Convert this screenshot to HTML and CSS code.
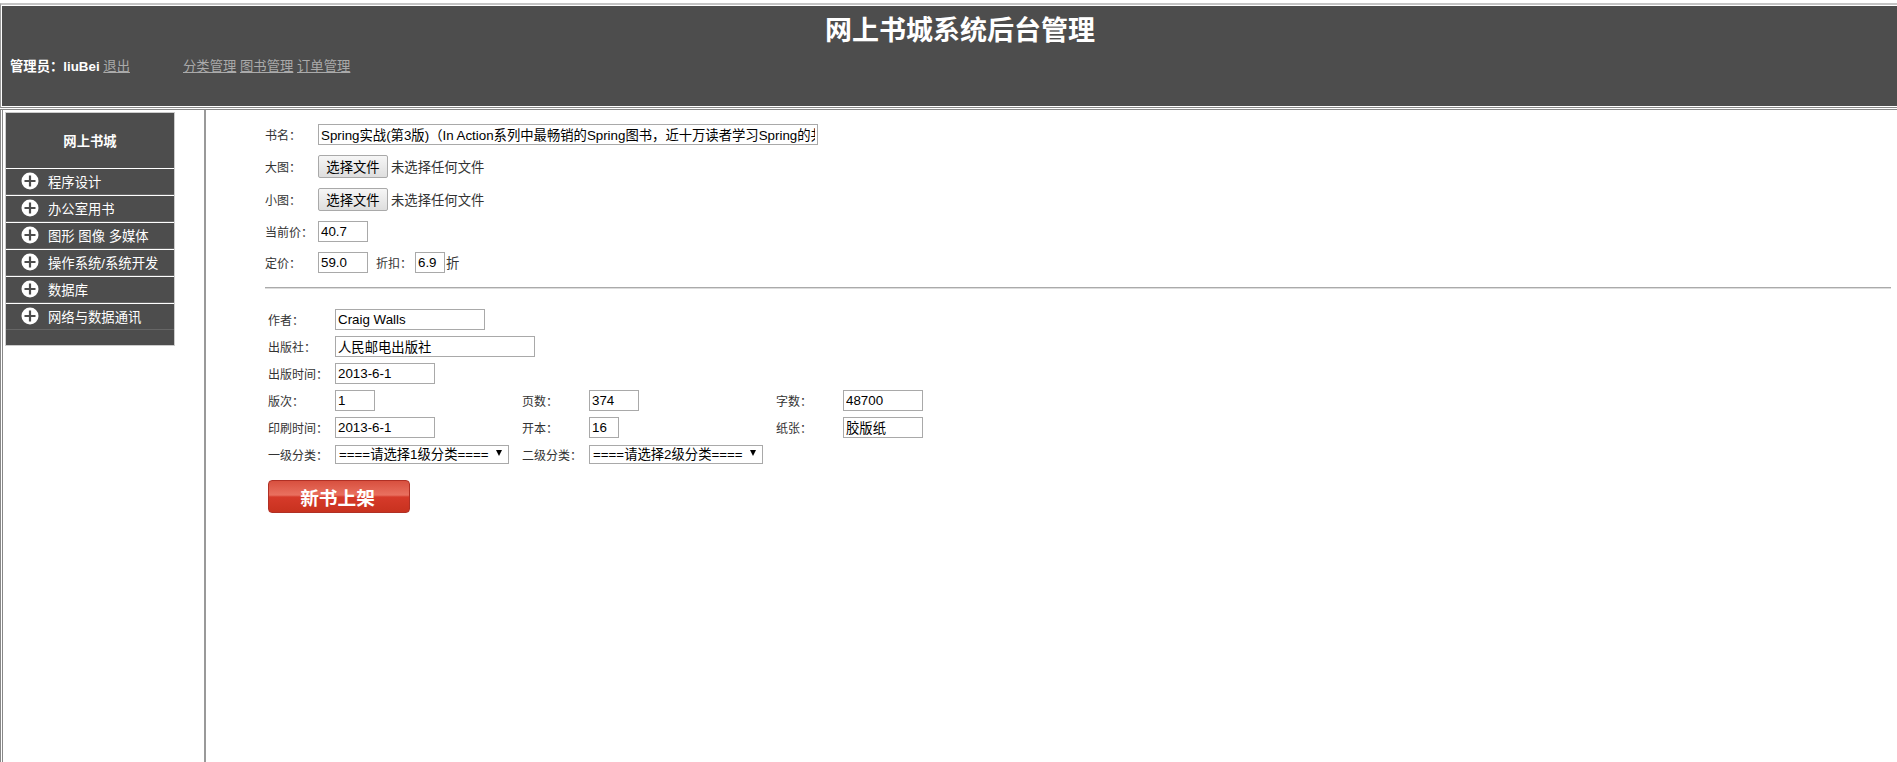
FILE: index.html
```html
<!DOCTYPE html>
<html lang="zh-CN">
<head>
    <meta charset="utf-8">
    <title>网上书城系统后台管理</title>
    <link rel="stylesheet" href="styles.css">
</head>
<body>
    <div class="top-frame">
        <header class="top">
            <h1>网上书城系统后台管理</h1>
            <div class="top-nav">
                <span class="admin"><b class="admin-name">管理员：liuBei</b> <a href="#">退出</a></span>
                <span class="links"><a href="#">分类管理</a> <a href="#">图书管理</a> <a href="#">订单管理</a></span>
            </div>
        </header>
    </div>
    <div class="frames">
        <nav class="left">
            <div class="menu">
                <div class="menu-title">网上书城</div>
                <div class="menu-item"><svg class="plus" viewBox="0 0 18 18"><circle cx="9" cy="9" r="8.5" fill="#fff"/><path d="M3.5 9h11M9 3.5v11" stroke="#4d4d4d" stroke-width="2.2"/></svg>程序设计</div>
                <div class="menu-item"><svg class="plus" viewBox="0 0 18 18"><circle cx="9" cy="9" r="8.5" fill="#fff"/><path d="M3.5 9h11M9 3.5v11" stroke="#4d4d4d" stroke-width="2.2"/></svg>办公室用书</div>
                <div class="menu-item"><svg class="plus" viewBox="0 0 18 18"><circle cx="9" cy="9" r="8.5" fill="#fff"/><path d="M3.5 9h11M9 3.5v11" stroke="#4d4d4d" stroke-width="2.2"/></svg>图形 图像 多媒体</div>
                <div class="menu-item"><svg class="plus" viewBox="0 0 18 18"><circle cx="9" cy="9" r="8.5" fill="#fff"/><path d="M3.5 9h11M9 3.5v11" stroke="#4d4d4d" stroke-width="2.2"/></svg>操作系统/系统开发</div>
                <div class="menu-item"><svg class="plus" viewBox="0 0 18 18"><circle cx="9" cy="9" r="8.5" fill="#fff"/><path d="M3.5 9h11M9 3.5v11" stroke="#4d4d4d" stroke-width="2.2"/></svg>数据库</div>
                <div class="menu-item"><svg class="plus" viewBox="0 0 18 18"><circle cx="9" cy="9" r="8.5" fill="#fff"/><path d="M3.5 9h11M9 3.5v11" stroke="#4d4d4d" stroke-width="2.2"/></svg>网络与数据通讯</div>
                <div class="menu-foot"></div>
            </div>
        </nav>
        <main class="content">
            <div class="row-a">
                <span class="lab-a">书名：</span>
                <input class="txt w-name" type="text" value="Spring实战(第3版)（In Action系列中最畅销的Spring图书，近十万读者学习Spring的共同选择）">
            </div>
            <div class="row-a">
                <span class="lab-a">大图：</span>
                <button class="file-btn" type="button">选择文件</button><span class="no-file">未选择任何文件</span>
            </div>
            <div class="row-a">
                <span class="lab-a">小图：</span>
                <button class="file-btn" type="button">选择文件</button><span class="no-file">未选择任何文件</span>
            </div>
            <div class="row-a">
                <span class="lab-a">当前价：</span>
                <input class="txt w-50" type="text" value="40.7">
            </div>
            <div class="row-a">
                <span class="lab-a">定价：</span>
                <input class="txt w-50" type="text" value="59.0">
                <span class="lab-off">折扣：</span>
                <input class="txt w-30" type="text" value="6.9">
                <span class="zhe">折</span>
            </div>
            <hr class="rule">
            <div class="grid">
                <div class="row-b"><span class="lab-b">作者：</span><input class="txt w-150" type="text" value="Craig Walls"></div>
                <div class="row-b"><span class="lab-b">出版社：</span><input class="txt w-200" type="text" value="人民邮电出版社"></div>
                <div class="row-b"><span class="lab-b">出版时间：</span><input class="txt w-100" type="text" value="2013-6-1"></div>
                <div class="row-b">
                    <span class="cell-1"><span class="lab-b">版次：</span><input class="txt w-40" type="text" value="1"></span>
                    <span class="cell-2"><span class="lab-b">页数：</span><input class="txt w-50" type="text" value="374"></span>
                    <span class="cell-3"><span class="lab-b">字数：</span><input class="txt w-80" type="text" value="48700"></span>
                </div>
                <div class="row-b">
                    <span class="cell-1"><span class="lab-b">印刷时间：</span><input class="txt w-100" type="text" value="2013-6-1"></span>
                    <span class="cell-2"><span class="lab-b">开本：</span><input class="txt w-30" type="text" value="16"></span>
                    <span class="cell-3"><span class="lab-b">纸张：</span><input class="txt w-80" type="text" value="胶版纸"></span>
                </div>
                <div class="row-b">
                    <span class="cell-1"><span class="lab-b">一级分类：</span><span class="sel">====请选择1级分类====<i class="arrow"></i></span></span>
                    <span class="cell-2"><span class="lab-b">二级分类：</span><span class="sel">====请选择2级分类====<i class="arrow"></i></span></span>
                </div>
            </div>
            <button class="submit" type="button"><span>新书上架</span></button>
        </main>
    </div>
</body>
</html>
```
FILE: styles.css
```css
/* Font */
html, body {height: 100%}
body {margin: 0; background: #fff; font-family: "Liberation Sans", "Noto Sans CJK SC", sans-serif; font-size: 12px; color: #333; overflow: hidden}

/* Top frame */
.top-frame {margin-top: 3px; padding: 1px 0 1px 1px; border-top: 2px solid #c4c4c4; border-left: 1px solid #999; border-bottom: 1px solid #888}
.top {height: 100px; background: #4d4d4d; color: #fff}
.top h1 {margin: 0; padding: 7px 0 0 21px; height: 37px; line-height: 37px; text-align: center; font-size: 27px; font-weight: bold}
.top-nav {display: flex; padding: 8px 0 0 8px; line-height: 18px; font-size: 13.33px}
.admin {width: 173px}
.admin-name {font-weight: bold}
.top a {color: #aaa}

/* Frames below */
.frames {display: flex; height: calc(100vh - 110px); margin-top: 1px; border-top: 1px solid #888; border-left: 1px solid #888}
.left {width: 204px; flex: none; box-sizing: border-box; margin-left: 1px; border-left: 1px solid #888; border-right: 2px solid #999; padding: 2px 0 0 2px}
.menu {width: 170px; box-sizing: border-box; background: #4d4d4d; border: 1px solid #ccc; color: #fff}
.menu-title {height: 55px; line-height: 58px; text-align: center; font-weight: bold; font-size: 13.33px}
.menu-item {box-sizing: border-box; height: 27px; border-top: 1px solid #fff; border-bottom: 1px solid #666; padding: 0 0 1px 15px; display: flex; align-items: center; gap: 9px; font-size: 13.33px}
.plus {width: 18px; height: 18px; flex: none}
.menu-foot {height: 15px}

/* Content */
.content {flex: 1; padding: 14px 6px 0 59px; overflow: hidden}
.row-a {display: flex; align-items: center; margin-bottom: 10px}
.lab-a {width: 53px; flex: none}
.lab-off {margin-left: 8px; width: 39px}
.zhe {margin-left: 1px; font-size: 13.33px}
.txt {box-sizing: border-box; height: 21px; border: 1px solid #a9a9a9; padding: 1px 2px; font: 13.33px "Liberation Sans", "Noto Sans CJK SC", sans-serif; color: #000; margin: 0; background: #fff}
.w-name {width: 500px}
.w-30 {width: 30px}
.w-40 {width: 40px}
.w-50 {width: 50px}
.w-80 {width: 80px}
.w-100 {width: 100px}
.w-150 {width: 150px}
.w-200 {width: 200px}
.file-btn {box-sizing: border-box; width: 70px; height: 23px; padding: 0; font: 13.33px "Noto Sans CJK SC", sans-serif; color: #000; border: 1px solid #a9a9a9; border-radius: 2px; background: linear-gradient(#f6f6f6, #dedede)}
.no-file {margin-left: 3px; font-size: 13.33px}
.rule {margin: 14px 0 17px; height: 0; border: 0; border-top: 1px solid #aaa; border-bottom: 1px solid #ddd}

/* Lower fields */
.grid {padding-left: 3px}
.row-b {display: flex; align-items: center; height: 27px}
.lab-b {display: inline-block; width: 67px; flex: none}
.cell-1, .cell-2, .cell-3 {display: flex; align-items: center; flex: none}
.cell-1 {width: 254px}
.cell-2 {width: 254px}
.sel {position: relative; box-sizing: border-box; display: block; width: 174px; height: 19px; line-height: 17px; border: 1px solid #a9a9a9; padding-left: 3px; color: #000; font-size: 13.33px; white-space: nowrap; overflow: hidden}
.arrow {position: absolute; right: 6px; top: 4px; border-left: 3px solid transparent; border-right: 3px solid transparent; border-top: 6px solid #000}
.submit {display: block; margin: 12px 0 0 3px; width: 142px; height: 33px; padding: 0 3px 0 0; border: 1px solid #b03025; border-radius: 4px; color: #fff; font: bold 18.67px "Liberation Serif", "Noto Sans CJK SC", serif; background: linear-gradient(#d8503f 0, #e9705f 14px, #d63a2a 16px, #c8321f 100%)}
```
